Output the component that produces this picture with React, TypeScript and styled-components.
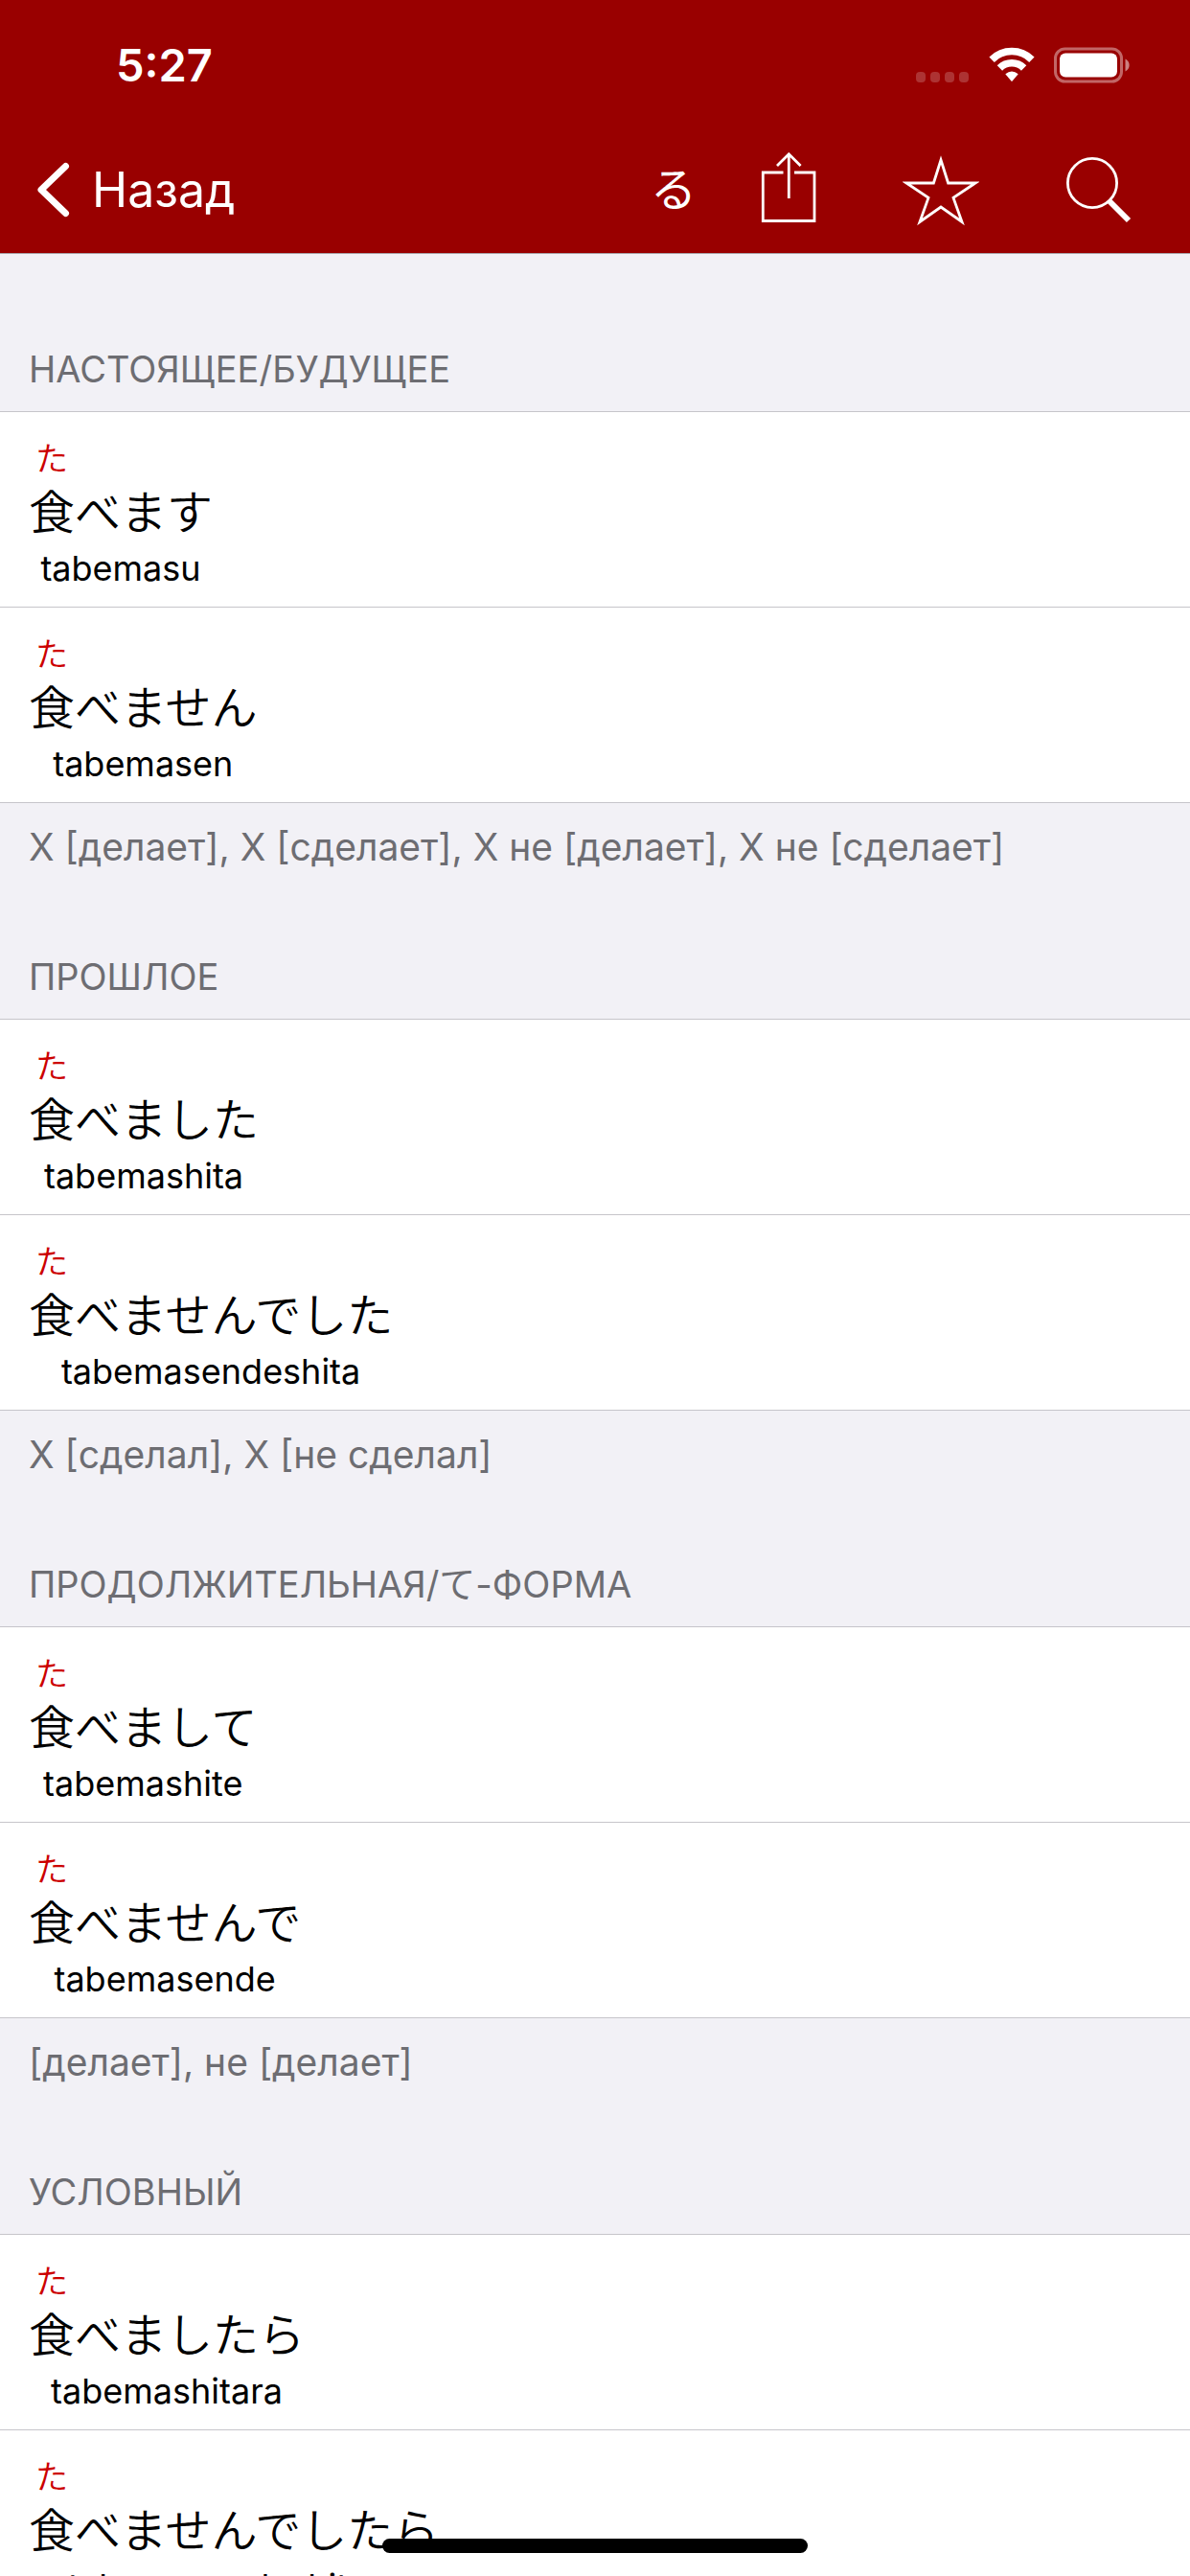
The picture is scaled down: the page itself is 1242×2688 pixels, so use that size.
import React from "react";
import styled, { createGlobalStyle } from "styled-components";

const latin = `Inter, "Noto Sans CJK JP", sans-serif`;
const japanese = `"Noto Sans CJK JP", sans-serif`;
const japaneseLight = `"Noto Sans CJK JP DemiLight", "Noto Sans CJK JP", sans-serif`;

const GlobalStyle = createGlobalStyle`
  *, *::before, *::after { box-sizing: border-box; }
  body { margin: 0; background: #f2f1f6; }
`;

const Screen = styled.div`
  position: relative;
  display: flex;
  flex-direction: column;
  height: 100vh;
  overflow: hidden;
  background: #f2f1f6;
  color: #000;
  font-family: ${latin};
`;

const TopBar = styled.header`
  flex: none;
  background: #990000;
  color: #fff;
  border-bottom: 1px solid #a9a4a9;
`;

const StatusBar = styled.div`
  display: flex;
  align-items: center;
  justify-content: space-between;
  height: 132px;
  padding: 4px 62px 0 121px;
`;

const Time = styled.time`
  font-size: 47px;
  line-height: 56px;
  font-weight: 600;
`;

const StatusIcons = styled.div`
  display: flex;
  align-items: center;
  gap: 20px;
`;

const NavBar = styled.nav`
  display: flex;
  align-items: center;
  justify-content: space-between;
  height: 132px;
  padding: 0 60px 0 38px;
`;

const BarButton = styled.button`
  display: flex;
  align-items: center;
  gap: 22px;
  padding: 0;
  border: 0;
  background: none;
  color: inherit;
  font-family: ${latin};
  font-size: 50px;
  line-height: 60px;
  cursor: pointer;
`;

const KanaButton = styled(BarButton)`
  padding-bottom: 8px;
  font-family: ${japanese};
  font-size: 48px;
`;

const Actions = styled.div`
  display: flex;
  align-items: center;
  gap: 67px;
`;

const IconGroup = styled.div`
  display: flex;
  align-items: center;
  gap: 90px;
`;

const Content = styled.main`
  flex: 1;
  min-height: 0;
  overflow: hidden;
  padding-top: 9px;
`;

const Section = styled.section``;

const SectionTitle = styled.h2`
  margin: 0;
  padding: 87px 30px 20px;
  border-bottom: 1px solid #c6c5ca;
  color: #6d6d72;
  font-size: 38px;
  line-height: 48px;
  font-weight: 400;
  text-transform: uppercase;
`;

const SectionNote = styled.p`
  margin: 0;
  padding: 22px 30px 0;
  color: #6d6d72;
  font-size: 39px;
  line-height: 48px;
`;

const Forms = styled.ul`
  margin: 0;
  padding: 0;
  list-style: none;
`;

const FormRow = styled.li`
  display: flex;
  padding: 25px 30px 10px;
  border-bottom: 1px solid #c6c5ca;
  background: #fff;
`;

const Word = styled.div`
  display: flex;
  flex-direction: column;
  align-items: center;
`;

const Reading = styled.span`
  align-self: flex-start;
  width: 48px;
  color: #cc0000;
  font-family: ${japaneseLight};
  font-size: 34px;
  font-weight: 350;
  line-height: 44px;
  text-align: center;
`;

const Kanji = styled.span`
  font-family: ${japaneseLight};
  font-size: 48px;
  font-weight: 350;
  line-height: 64px;
  white-space: nowrap;
`;

const Romaji = styled.span`
  font-size: 36px;
  line-height: 60px;
  white-space: nowrap;
`;

const HomeIndicator = styled.div`
  position: absolute;
  bottom: 24px;
  left: 50%;
  width: 444px;
  height: 15px;
  margin-left: -222px;
  border-radius: 8px;
  background: #000;
`;

type Form = { kanji: string; romaji: string };
type Group = { title: string; forms: Form[]; note?: string };

const groups: Group[] = [
  {
    title: "Настоящее/будущее",
    forms: [
      { kanji: "食べます", romaji: "tabemasu" },
      { kanji: "食べません", romaji: "tabemasen" },
    ],
    note: "X [делает], X [сделает], X не [делает], X не [сделает]",
  },
  {
    title: "Прошлое",
    forms: [
      { kanji: "食べました", romaji: "tabemashita" },
      { kanji: "食べませんでした", romaji: "tabemasendeshita" },
    ],
    note: "X [сделал], X [не сделал]",
  },
  {
    title: "Продолжительная/て-форма",
    forms: [
      { kanji: "食べまして", romaji: "tabemashite" },
      { kanji: "食べませんで", romaji: "tabemasende" },
    ],
    note: "[делает], не [делает]",
  },
  {
    title: "Условный",
    forms: [
      { kanji: "食べましたら", romaji: "tabemashitara" },
      { kanji: "食べませんでしたら", romaji: "tabemasendeshitara" },
    ],
  },
];

const SignalIcon = () => (
  <svg width="56" height="38" viewBox="0 0 56 38" fill="#fff" fillOpacity="0.2" aria-hidden="true">
    {[0, 15, 30, 45].map((x) => (
      <rect key={x} x={x} y="26" width="10" height="11" rx="4" />
    ))}
  </svg>
);

const WifiIcon = () => (
  <svg width="48" height="38" viewBox="0 0 48 38" fill="none" stroke="#fff" strokeWidth="7.6" aria-hidden="true">
    <path d="M3.1 13.2A29.6 29.6 0 0 1 44.9 13.2" />
    <path d="M11.4 22A17.8 17.8 0 0 1 36.6 22" />
    <path d="M17.3 28.3Q24 22.6 30.7 28.3L24.6 35.6Q24 36.2 23.4 35.6Z" fill="#fff" stroke="none" />
  </svg>
);

const BatteryIcon = () => (
  <svg width="80" height="38" viewBox="0 0 80 38" aria-hidden="true">
    <rect x="1.5" y="2" width="69" height="34" rx="10" fill="none" stroke="#fff" strokeOpacity="0.4" strokeWidth="3" />
    <rect x="6" y="6.5" width="60" height="25" rx="6" fill="#fff" />
    <path d="M74.5 12.5C80 15 80 23 74.5 25.5Z" fill="#fff" fillOpacity="0.5" />
  </svg>
);

const ChevronIcon = () => (
  <svg width="36" height="60" viewBox="0 0 36 60" fill="none" stroke="#fff" strokeWidth="7" strokeLinecap="round" strokeLinejoin="round" aria-hidden="true">
    <path d="M30.5 5.5L5 30L30.5 54.5" />
  </svg>
);

const ShareIcon = () => (
  <svg width="58" height="78" viewBox="0 0 58 78" fill="none" stroke="#fff" strokeWidth="2.8" aria-hidden="true">
    <path d="M23.5 21H2.3V71.5H56V21H35M29.3 48V2M17 14L29.3 1.8L41.6 14" />
  </svg>
);

const StarIcon = () => (
  <svg width="80" height="78" viewBox="0 0 80 78" fill="none" stroke="#fff" strokeWidth="2.8" strokeMiterlimit="10" aria-hidden="true">
    <path d="M40 8L47.6 32H76L53 47.4L62 72.5L40 57L18 72.5L27 47.4L4 32H32.4Z" />
  </svg>
);

const SearchIcon = () => (
  <svg width="70" height="78" viewBox="0 0 70 78" fill="none" stroke="#fff" aria-hidden="true">
    <circle cx="28" cy="32" r="25.6" strokeWidth="2.8" />
    <path d="M46 51L66 71" strokeWidth="6" />
  </svg>
);

export default function App() {
  return (
    <Screen>
      <GlobalStyle />
      <TopBar>
        <StatusBar>
          <Time>5:27</Time>
          <StatusIcons>
            <SignalIcon />
            <WifiIcon />
            <BatteryIcon />
          </StatusIcons>
        </StatusBar>
        <NavBar>
          <BarButton type="button">
            <ChevronIcon />
            Назад
          </BarButton>
          <Actions>
            <KanaButton type="button">る</KanaButton>
            <IconGroup>
              <BarButton type="button" aria-label="Поделиться"><ShareIcon /></BarButton>
              <BarButton type="button" aria-label="Избранное"><StarIcon /></BarButton>
              <BarButton type="button" aria-label="Поиск"><SearchIcon /></BarButton>
            </IconGroup>
          </Actions>
        </NavBar>
      </TopBar>
      <Content>
        {groups.map((group) => (
          <Section key={group.title}>
            <SectionTitle>{group.title}</SectionTitle>
            <Forms>
              {group.forms.map((form) => (
                <FormRow key={form.kanji}>
                  <Word lang="ja">
                    <Reading>た</Reading>
                    <Kanji>{form.kanji}</Kanji>
                    <Romaji>{form.romaji}</Romaji>
                  </Word>
                </FormRow>
              ))}
            </Forms>
            {group.note && <SectionNote>{group.note}</SectionNote>}
          </Section>
        ))}
      </Content>
      <HomeIndicator />
    </Screen>
  );
}
